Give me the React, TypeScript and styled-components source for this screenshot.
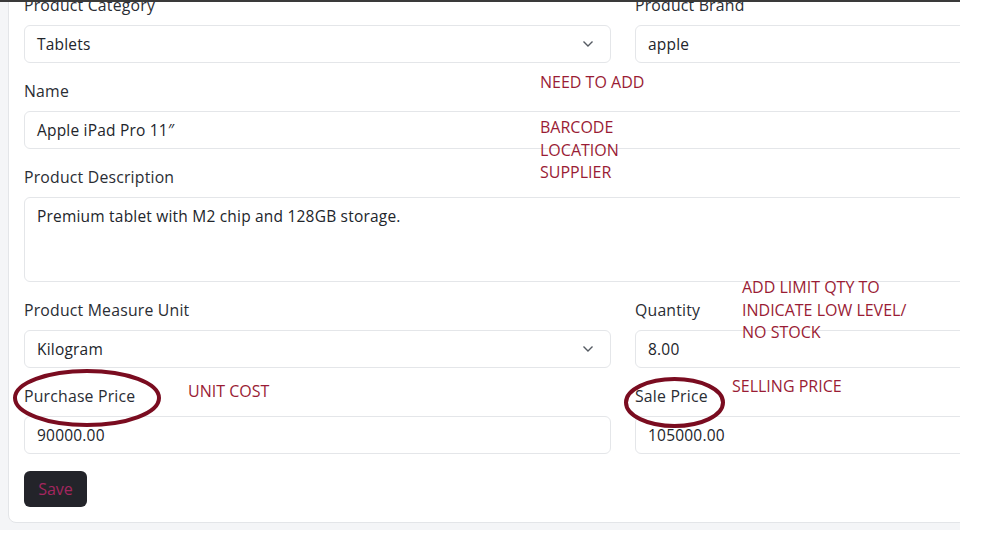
import React from "react";
import styled, { createGlobalStyle } from "styled-components";

const Global = createGlobalStyle`
  html, body { margin: 0; padding: 0; background: #ffffff; }
  body { font-family: "Open Sans", "Lato", sans-serif; }
  * { box-sizing: border-box; }
`;

const Shot = styled.div`
  position: relative;
  width: 960px;
  height: 530px;
  background: #f4f5f7;
  border-top: 2px solid #3a3a3a;
  padding: 0 0 7px 8px;
  overflow: hidden;
`;

const Card = styled.div`
  width: 1214px;
  margin-top: -24px;
  background: #ffffff;
  border: 1px solid #e3e5e8;
  border-radius: 8px;
  padding: 16px 15px 15px 15px;
  display: flex;
  flex-direction: column;
  gap: 18px;
`;

const Row = styled.div`
  display: grid;
  grid-template-columns: 587px 587px;
  column-gap: 24px;
`;

const Field = styled.div`
  display: flex;
  flex-direction: column;
`;

const Label = styled.label`
  font-size: 15.8px;
  line-height: 20px;
  letter-spacing: 0.2px;
  color: #2a2d34;
  margin-bottom: 10px;
`;

const InputBox = styled.div<{ $tall?: boolean }>`
  position: relative;
  height: ${(p) => (p.$tall ? "85px" : "38px")};
  border: 1px solid #e4e6e9;
  border-radius: 6px;
  background: #fff;
  padding: ${(p) => (p.$tall ? "7px 12px" : "0 12px")};
  display: flex;
  align-items: ${(p) => (p.$tall ? "flex-start" : "center")};
  justify-content: space-between;
  font-size: 15.5px;
  letter-spacing: 0.2px;
  color: #22252b;
`;

const Chevron = () => (
  <svg width="12" height="8" viewBox="0 0 12 8" style={{ marginRight: 4 }}>
    <path d="M1.5 1.5 L6 6 L10.5 1.5" fill="none" stroke="#555a62" strokeWidth="1.4" />
  </svg>
);

const SaveButton = styled.button`
  width: 63px;
  height: 36px;
  margin-top: -1px;
  border: none;
  border-radius: 6px;
  background: #23242a;
  color: #a4265f;
  font-family: inherit;
  font-size: 16px;
  padding: 0;
`;

const Note = styled.div<{ $x: number; $y: number }>`
  position: absolute;
  left: ${(p) => p.$x}px;
  top: ${(p) => p.$y}px;
  font-family: "Open Sans", sans-serif;
  font-size: 16px;
  line-height: 22.5px;
  color: #9a1c35;
  letter-spacing: 0;
  white-space: nowrap;
`;

const Ring = styled.svg<{ $x: number; $y: number }>`
  position: absolute;
  left: ${(p) => p.$x}px;
  top: ${(p) => p.$y}px;
  overflow: visible;
`;

export default function App() {
  return (
    <>
      <Global />
      <Shot>
        <Card>
          <Row>
            <Field>
              <Label>Product Category</Label>
              <InputBox>
                <span>Tablets</span>
                <Chevron />
              </InputBox>
            </Field>
            <Field>
              <Label>Product Brand</Label>
              <InputBox>
                <span>apple</span>
              </InputBox>
            </Field>
          </Row>
          <Field>
            <Label>Name</Label>
            <InputBox>
              <span>Apple iPad Pro 11″</span>
            </InputBox>
          </Field>
          <Field>
            <Label>Product Description</Label>
            <InputBox $tall>
              <span>Premium tablet with M2 chip and 128GB storage.</span>
            </InputBox>
          </Field>
          <Row>
            <Field>
              <Label>Product Measure Unit</Label>
              <InputBox>
                <span>Kilogram</span>
                <Chevron />
              </InputBox>
            </Field>
            <Field>
              <Label>Quantity</Label>
              <InputBox>
                <span>8.00</span>
              </InputBox>
            </Field>
          </Row>
          <Row>
            <Field>
              <Label>Purchase Price</Label>
              <InputBox>
                <span>90000.00</span>
              </InputBox>
            </Field>
            <Field>
              <Label>Sale Price</Label>
              <InputBox>
                <span>105000.00</span>
              </InputBox>
            </Field>
          </Row>
          <div>
            <SaveButton>Save</SaveButton>
          </div>
        </Card>

        <Note $x={540} $y={69}>NEED TO ADD</Note>
        <Note $x={540} $y={114}>
          BARCODE
          <br />
          LOCATION
          <br />
          SUPPLIER
        </Note>
        <Note $x={742} $y={274}>
          ADD LIMIT QTY TO
          <br />
          INDICATE LOW LEVEL/
          <br />
          NO STOCK
        </Note>
        <Note $x={188} $y={378}>UNIT COST</Note>
        <Note $x={732} $y={373}>SELLING PRICE</Note>

        <Ring $x={13} $y={366} width="148" height="60">
          <ellipse cx="74" cy="30" rx="72" ry="27" fill="none" stroke="#7a0c20" strokeWidth="4" />
        </Ring>
        <Ring $x={624} $y={375} width="101" height="51">
          <ellipse cx="50.5" cy="25.5" rx="48.5" ry="23.5" fill="none" stroke="#7a0c20" strokeWidth="4" />
        </Ring>
      </Shot>
    </>
  );
}
